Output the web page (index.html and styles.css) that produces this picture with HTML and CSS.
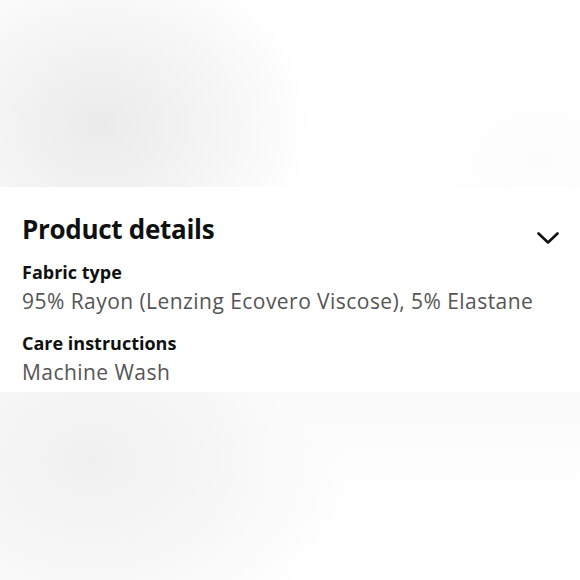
FILE: index.html
```html
<!DOCTYPE html>
<html>
<head>
<meta charset="utf-8">
<link rel="stylesheet" href="styles.css">
</head>
<body>
<div class="page">
  <div class="blur blur-top"></div>
  <section class="panel">
    <div class="header">
      <h2 class="title">Product details</h2>
      <svg class="chevron" width="24" height="14" viewBox="0 0 24 14"><path d="M2.5 2.5 L12 11.5 L21.5 2.5" fill="none" stroke="#111" stroke-width="2.6" stroke-linecap="round" stroke-linejoin="round"/></svg>
    </div>
    <div class="detail">
      <div class="label">Fabric type</div>
      <div class="value">95% Rayon (Lenzing Ecovero Viscose), 5% Elastane</div>
    </div>
    <div class="detail">
      <div class="label">Care instructions</div>
      <div class="value">Machine Wash</div>
    </div>
  </section>
  <div class="blur blur-bottom"></div>
</div>
</body>
</html>
```

FILE: styles.css
```css
html, body {
  margin: 0;
  padding: 0;
  background: #fff;
}
.page {
  width: 580px;
  height: 580px;
  display: flex;
  flex-direction: column;
  font-family: "Open Sans", "Noto Sans", sans-serif;
  overflow: hidden;
}
.blur-top {
  height: 187px;
  background:
    radial-gradient(ellipse 210px 175px at 100px 125px, #ebebeb 0%, #f2f2f2 40%, #fafafa 80%, rgba(255,255,255,0) 100%),
    radial-gradient(ellipse 160px 120px at 540px 160px, #fcfcfc 0%, rgba(255,255,255,0) 100%),
    #fff;
}
.blur-bottom {
  flex: 1;
  background:
    radial-gradient(ellipse 260px 200px at 90px 460px, #f0f0f0 0%, #f5f5f5 40%, #fbfbfb 80%, rgba(255,255,255,0) 100%),
    linear-gradient(180deg, #fafafa 0%, #fdfdfd 40%, #fff 100%);
  background-position: 0 -392px, 0 0;
  background-size: 580px 580px, 100% 100%;
  background-repeat: no-repeat;
}
.panel {
  height: 205px;
  box-sizing: border-box;
  padding: 24px 20px 0 22px;
  background: #fff;
}
.header {
  display: flex;
  align-items: flex-end;
  justify-content: space-between;
}
.title {
  margin: 0;
  font-size: 26px;
  font-weight: 700;
  line-height: 36px;
  color: #0f1111;
  letter-spacing: -0.3px;
}
.chevron {
  margin-bottom: 2px;
}
.detail {
  margin-top: 12px;
}
.detail + .detail {
  margin-top: 13px;
}
.label {
  font-size: 18px;
  font-weight: 700;
  line-height: 27px;
  color: #0f1111;
}
.value {
  font-size: 21px;
  line-height: 31px;
  letter-spacing: 0.45px;
  color: #555;
}
```
